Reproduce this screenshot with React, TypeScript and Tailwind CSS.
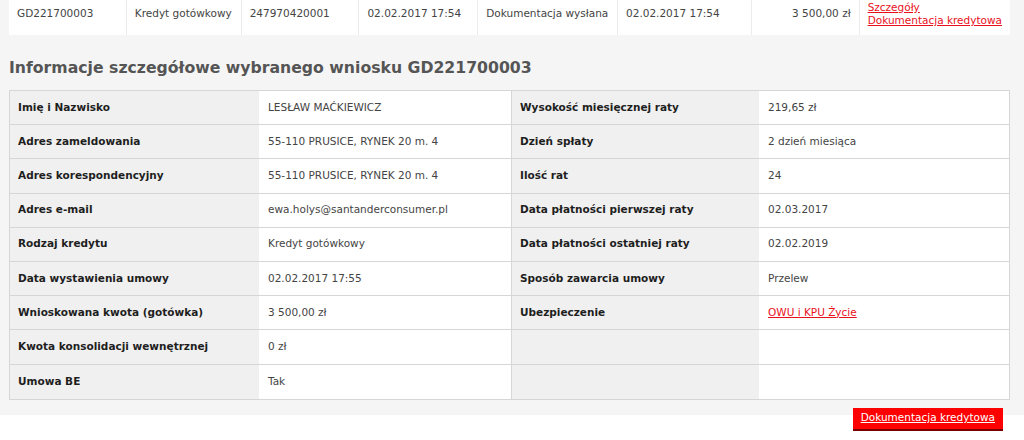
const font = { fontFamily: '"DejaVu Sans", Verdana, sans-serif' };

interface TopCell {
  text: string;
  width: string;
  right?: boolean;
}

const topCells: TopCell[] = [
  { text: 'GD221700003', width: 'w-[118px]' },
  { text: 'Kredyt gotówkowy', width: 'w-[115px]' },
  { text: '247970420001', width: 'w-[118px]' },
  { text: '02.02.2017 17:54', width: 'w-[119px]' },
  { text: 'Dokumentacja wysłana', width: 'w-[140px]' },
  { text: '02.02.2017 17:54', width: 'w-[134px]' },
  { text: '3 500,00 zł', width: 'w-[108px]', right: true },
];

type Row = [string, React.ReactNode, string, React.ReactNode];

const rows: Row[] = [
  ['Imię i Nazwisko', 'LESŁAW MAĆKIEWICZ', 'Wysokość miesięcznej raty', '219,65 zł'],
  ['Adres zameldowania', '55-110 PRUSICE, RYNEK 20 m. 4', 'Dzień spłaty', '2 dzień miesiąca'],
  ['Adres korespondencyjny', '55-110 PRUSICE, RYNEK 20 m. 4', 'Ilość rat', '24'],
  ['Adres e-mail', 'ewa.holys@santanderconsumer.pl', 'Data płatności pierwszej raty', '02.03.2017'],
  ['Rodzaj kredytu', 'Kredyt gotówkowy', 'Data płatności ostatniej raty', '02.02.2019'],
  ['Data wystawienia umowy', '02.02.2017 17:55', 'Sposób zawarcia umowy', 'Przelew'],
  [
    'Wnioskowana kwota (gotówka)',
    '3 500,00 zł',
    'Ubezpieczenie',
    <a href="#" className="text-[#e8111b] underline">
      OWU i KPU Życie
    </a>,
  ],
  ['Kwota konsolidacji wewnętrznej', '0 zł', '', ''],
  ['Umowa BE', 'Tak', '', ''],
];

function DetailRow({ row, last }: { row: Row; last: boolean }) {
  const [l1, v1, l2, v2] = row;
  return (
    <div
      className={`flex h-[34.2px] whitespace-nowrap ${last ? '' : 'border-b border-[#d6d6d6]'}`}
    >
      <div className="w-[249px] bg-[#f0f0f0] flex items-center px-2 font-bold text-[#1e1e1e]">
        {l1}
      </div>
      <div className="w-[252px] bg-white flex items-center px-[9px] text-[#444]">
        {v1}
      </div>
      <div className="w-[248px] bg-[#f0f0f0] border-l border-[#d6d6d6] flex items-center px-2 font-bold text-[#1e1e1e]">
        {l2}
      </div>
      <div className="flex-1 bg-white flex items-center px-[9px] text-[#444]">
        {v2}
      </div>
    </div>
  );
}

export default function App() {
  return (
    <div className="w-[1024px] h-[440px] overflow-hidden bg-white text-[10.5px]" style={font}>
      <div className="bg-[#f5f5f5] h-[423px] pl-[9px] pr-[14px]">
        <div className="flex -mt-[8px] bg-white w-[1001px] h-[43px] text-[#444] whitespace-nowrap">
          {topCells.map((c, i) => (
            <div
              key={i}
              className={`${c.width} flex items-center px-2 border-r border-[#ececec] ${
                c.right ? 'justify-end' : ''
              }`}
            >
              {c.text}
            </div>
          ))}
          <div className="flex-1 flex flex-col justify-center px-2 leading-[13px] pt-[1px]">
            <a href="#" className="text-[#e8111b] underline">
              Szczegóły
            </a>
            <a href="#" className="text-[#e8111b] underline">
              Dokumentacja kredytowa
            </a>
          </div>
        </div>

        <h2 className="text-[15.7px] font-bold text-[#555] leading-[20px] mt-[23px] mb-[12px] whitespace-nowrap">
          Informacje szczegółowe wybranego wniosku GD221700003
        </h2>

        <div className="w-[1001px] border border-[#d6d6d6]">
          {rows.map((r, i) => (
            <DetailRow key={i} row={r} last={i === rows.length - 1} />
          ))}
        </div>

        <div className="flex justify-end pr-[7px] mt-[8px]">
          <a
            href="#"
            className="bg-[#fe0000] text-white underline h-[23px] px-[8px] flex items-center border-b-2 border-[#7a0000] whitespace-nowrap"
          >
            Dokumentacja kredytowa
          </a>
        </div>
      </div>
    </div>
  );
}
